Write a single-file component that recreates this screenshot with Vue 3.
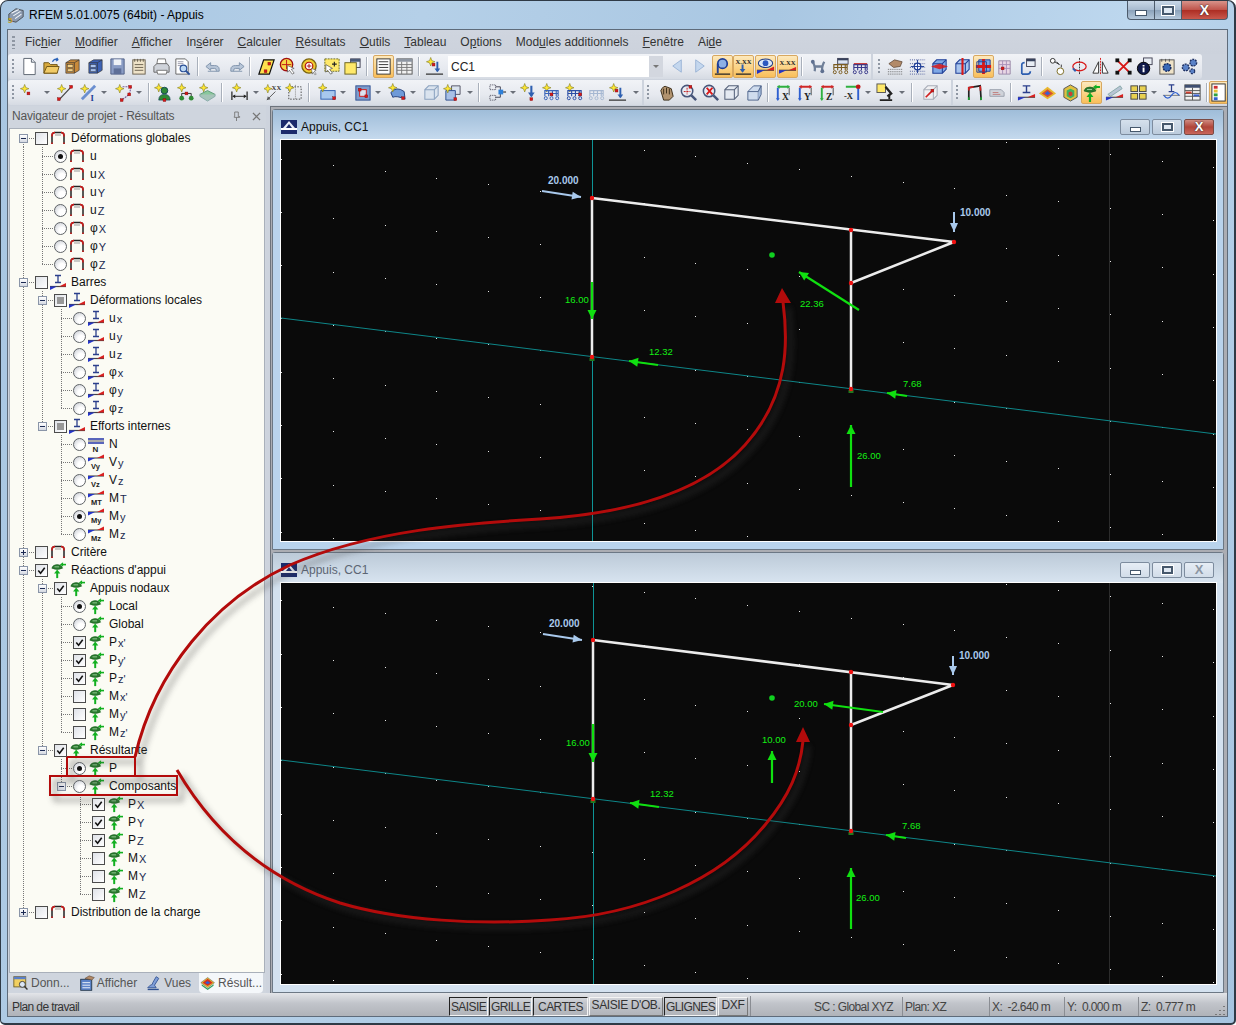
<script setup>
// petits morceaux d'icones
const sp = (x = 5, y = 5) => `<path d="M${x} ${y - 4.5}l1.2 3.3 3.3 1.2-3.3 1.2-1.2 3.3-1.2-3.3-3.3-1.2 3.3-1.2z" fill="#ffe733" stroke="#7d7a20" stroke-width=".6"/>`
const rd = (x, y) => `<rect x="${x - 1.5}" y="${y - 1.5}" width="3" height="3" fill="#d81818" stroke="#7a1010" stroke-width=".4"/>`
const txt = (s, x, y, fs = 7, c = '#222', extra = '') => `<text x="${x}" y="${y}" font-size="${fs}" fill="${c}" font-family="Liberation Serif, serif" font-weight="bold" ${extra}>${s}</text>`
const wedge = (y = 16) => `<path d="M1 ${y}H19" stroke="#333" stroke-width="1.2"/><path d="M1 ${y}h8L1 ${y + 3.5}z" fill="#2434c8"/><path d="M19 ${y}h-8l8-3.5z" fill="#d82020"/>`
const cab = (a, b) => `<path d="M3 6l5-3h9v11l-5 3H3z" fill="${a}" stroke="#333" stroke-width=".7"/><path d="M3 6h9v11M12 6l5-3" fill="none" stroke="#333" stroke-width=".7"/><rect x="4.5" y="8" width="6" height="3" fill="${b}" stroke="#333" stroke-width=".5"/><rect x="4.5" y="12.5" width="6" height="3" fill="${b}" stroke="#333" stroke-width=".5"/>`
const zoomG = (c) => `<circle cx="8.5" cy="8.5" r="6" fill="#e8edf5" stroke="#47557a" stroke-width="1.6"/><path d="M13 13l5 5" stroke="#47557a" stroke-width="2.6"/>${c}`
const cube = (s = '#5a7fb8', f = '#dfe8f4') => `<path d="M3 7l4-4h10v10l-4 4H3z" fill="${f}" stroke="${s}" stroke-width="1.1"/><path d="M3 7h10v10M13 7l4-4" fill="none" stroke="${s}" stroke-width="1.1"/>`
const truss = (c = '#3a64b8') => `<path d="M3 14V8h14v6M3 11h14M7 8v6M11 8v6M15 8v6" fill="none" stroke="${c}" stroke-width="1.2"/><circle cx="4" cy="16" r="1.6" fill="none" stroke="${c}"/><circle cx="10" cy="16" r="1.6" fill="none" stroke="${c}"/><circle cx="16" cy="16" r="1.6" fill="none" stroke="${c}"/>`
const view = (a, b, t) => `<path d="M4 4h12" stroke="${a}" stroke-width="2"/><path d="M3 4l3-2v4zM17 4l-3-2v4z" fill="${a}"/><path d="M4 5v12" stroke="${b}" stroke-width="2"/><path d="M4 19l-2-3h4z" fill="${b}"/><path d="M16 5v8" stroke="#666" stroke-width="1.2"/>${txt(t, 8.5, 18, 10)}`
const support = `<path d="M2 8q1-4 6-4t6 4q-6 3-12 0z" fill="#2b7a2f" stroke="#145a1a" stroke-width=".6"/><path d="M5 6.5h5" stroke="#9ccf9c"/><path d="M8 19v-6" stroke="#12b020" stroke-width="2.2"/><path d="M4.5 14L8 9.5l3.5 4.5z" fill="#12b020"/><path d="M18 4h-4" stroke="#12b020" stroke-width="1.8"/><path d="M14.5 1.5L11 4l3.5 2.5z" fill="#12b020"/>`

const ic = {
  new: `<path d="M4 1.5h8l4 4v13H4z" fill="#fff" stroke="#5c6470"/><path d="M12 1.5v4h4" fill="#e8ecf2" stroke="#5c6470"/>`,
  open: `<path d="M2 17V6h5l2 2h7v9z" fill="#d8a93c" stroke="#6f5415"/><path d="M2 17l3-7h13l-2 7z" fill="#f1cb66" stroke="#6f5415"/><path d="M11 5q2-4 6-2l-1.5-2M17 3l-2.5 1" fill="none" stroke="#2a62b8" stroke-width="1.4"/>`,
  cabY: cab('#c98a3a', '#f2cf84'),
  cabB: cab('#3d62b5', '#a9c3ee'),
  save: `<path d="M3 2h14v16H3z" fill="#8a9cc4" stroke="#4f5f86"/><rect x="6" y="2.5" width="8" height="6" fill="#eef1f6"/><rect x="6" y="12" width="8" height="6" fill="#5e6f98"/>`,
  clip: `<rect x="4" y="3" width="13" height="15" fill="#efe3c8" stroke="#6b6250"/><path d="M6 2v3M9 2v3M12 2v3M15 2v3M6 8h9M6 11h9M6 14h9" stroke="#6b6250"/>`,
  print: `<path d="M6 2h8l1 6H5z" fill="#fff" stroke="#777"/><path d="M2 10l3-3h11l2 3v6H2z" fill="#cfd3da" stroke="#666"/><path d="M5 14h11l-1 4H6z" fill="#fff" stroke="#777"/>`,
  prev: `<path d="M3 2h10l3 3v13H3z" fill="#fff" stroke="#666"/><path d="M5 5h6M5 7h6M5 9h4" stroke="#99a"/><circle cx="11" cy="12" r="3.5" fill="#bcd8f4" stroke="#2a4f96" stroke-width="1.2"/><path d="M13.5 14.5l4 4" stroke="#2a4f96" stroke-width="2"/>`,
  undo: `<path d="M4 15h12v-2q0-4-5-4H7V6L2 10l5 4v-2h4q2 0 2 2v1" fill="#b8c6d8" stroke="#7f93ac"/>`,
  redo: `<path d="M16 15H4v-2q0-4 5-4h4V6l5 4-5 4v-2H9q-2 0-2 2v1" fill="#b8c6d8" stroke="#7f93ac"/>`,
  para: `<path d="M7 3h11l-5 15H2z" fill="#ffe14d" stroke="#111" stroke-width="1.3"/>${rd(9, 15)}${rd(13, 7)}`,
  zwin: `<circle cx="9" cy="8" r="6.5" fill="#f8d848" stroke="#a01010" stroke-width="1.4"/><path d="M9 3v10M4 8h10" stroke="#c01818"/><path d="M10 9l7 3-3 1 3 4-2 1-3-4-2 2z" fill="#fff" stroke="#555" stroke-width=".7"/>`,
  zwin2: `<circle cx="9.5" cy="9.5" r="7.5" fill="#f0cc30" stroke="#7c6510" stroke-width="1.4"/><circle cx="9.5" cy="9.5" r="4" fill="#fff" stroke="#b01010" stroke-width="1.2"/><path d="M9.5 7v5M7 9.5h5" stroke="#b01010"/><path d="M12 12l5 2-2 1 2 3-1 1-2-3-1 2z" fill="#fff" stroke="#555" stroke-width=".6"/>`,
  sel: `<rect x="3" y="2" width="15" height="13" fill="#ffe96a" stroke="#6a6a20" stroke-dasharray="2 1"/><path d="M13 5v5M10.5 7.5h5" stroke="#222" stroke-width="1.2"/><path d="M4 8l7 4-3 1 3 4-2 1-3-4-2 2z" fill="#fff" stroke="#444" stroke-width=".7"/>`,
  win2: `<rect x="8" y="2" width="10" height="9" fill="#e8edf4" stroke="#445"/><rect x="8" y="2" width="10" height="3" fill="#4a5a78"/><rect x="2" y="6" width="12" height="12" fill="#ffe96a" stroke="#6a6220"/>`,
  list: `<rect x="3" y="2" width="14" height="16" fill="#fff" stroke="#333"/><path d="M5 5h10M5 8h10M5 11h10M5 14h10" stroke="#333"/>`,
  table: `<rect x="2" y="2" width="16" height="16" fill="#f2f2f2" stroke="#555"/><rect x="2" y="2" width="16" height="3" fill="#8e96a2"/><path d="M2 8h16M2 11h16M2 14h16M7 5v13M12.5 5v13" stroke="#777"/>`,
  ccl: `${sp(6, 5)}${rd(9, 8)}<path d="M13 5v10" stroke="#2e5fb0" stroke-width="2"/><path d="M10 12h6l-3 4z" fill="#2e5fb0"/><path d="M1 18h18" stroke="#333" stroke-width="1.4"/>`,
  aL: `<path d="M14 3v13L5 9.5z" fill="#c4d7ee" stroke="#9bb4d6"/>`,
  aR: `<path d="M6 3v13l9-6.5z" fill="#c4d7ee" stroke="#9bb4d6"/>`,
  p1: `<circle cx="10" cy="7" r="5" fill="#8db0e6" stroke="#1f3e96" stroke-width="1.8"/><path d="M5 7v10" stroke="#1f3e96" stroke-width="2"/><path d="M2 18h16" stroke="#222" stroke-width="1.4"/>`,
  xx1: `${txt('X.XX', 1.5, 7, 7)}<path d="M9 8v7" stroke="#2e5fb0" stroke-width="2"/><path d="M6 12.5h6l-3 4z" fill="#2e5fb0"/><path d="M2 18h16" stroke="#222" stroke-width="1.4"/>`,
  eye: `<ellipse cx="10" cy="6.5" rx="7.5" ry="4.5" fill="#dbe7f7" stroke="#1d3a85" stroke-width="1.1"/><circle cx="10" cy="6.5" r="3" fill="#2c58c0"/><path d="M1 14h18" stroke="#333" stroke-width="1.2"/><path d="M1 14h8l-8 4z" fill="#2434c8"/><path d="M19 14h-8l8-4z" fill="#d82020"/>`,
  xx2: `${txt('X.XX', 1.5, 8, 7)}${wedge(14)}`,
  bone: `<path d="M4 5q3 6 2 10M16 5q-3 6-2 10M6 10h8" fill="none" stroke="#6f7f98" stroke-width="2.4"/><circle cx="4" cy="5" r="2" fill="#5f7090"/><circle cx="14" cy="15" r="2" fill="#5f7090"/>`,
  val1: `<rect x="7" y="1.5" width="11" height="6" fill="#dbe4f2" stroke="#445"/><rect x="7" y="1.5" width="11" height="2" fill="#36415c"/>${truss('#7a5c20')}`,
  val2: `${truss('#3a3a8a')}<path d="M3 7h14" stroke="#c01818"/>`,
  hand: `<path d="M3 7l6-4 8 2-2 5-7 1z" fill="#b28a68" stroke="#4f3a28" stroke-width=".7"/><path d="M2 13h16M2 15.5h16M2 18h16" stroke="#666" stroke-dasharray="1 1"/>`,
  gridS: `<path d="M2 3h16M2 7h16M2 11h16M2 15h16M2 18h16" stroke="#4a5a9a" stroke-dasharray="1 1.2"/><circle cx="10" cy="10" r="3.5" fill="#f5f5ff" stroke="#1f3e96" stroke-width="1.3"/><path d="M10 3v14M3 10h14" stroke="#1f3e96"/>`,
  plane1: `${cube('#1f3e96', '#7ea8e6')}<path d="M1 10l9-3 9 3-9 3z" fill="#d81818" opacity=".85"/>`,
  plane2: `${cube('#1f3e96', '#a8c4ee')}<path d="M10 1v18" stroke="#d81818" stroke-width="2.2"/>`,
  plane3: `<path d="M5 3h12v12H5z" fill="#7ea8e6" stroke="#1f3e96"/><path d="M2 10h16M10 2v16" stroke="#d81818" stroke-width="3"/><path d="M3 5h10v11H3z" fill="none" stroke="#1f3e96"/>`,
  pink: `<path d="M4 4h12v14H4z" fill="#e8d6e4" stroke="#9a8aa8"/><path d="M4 8h12M4 12h12M8 4v14M12 4v14" stroke="#a890b8"/>${rd(8, 12)}`,
  winB: `<rect x="9" y="2" width="9" height="8" fill="#e8edf4" stroke="#445"/><rect x="9" y="2" width="9" height="2.5" fill="#36415c"/><path d="M4 18V8q0-2 3-2M4 18h6q3 0 3-3" fill="none" stroke="#2e5fb0" stroke-width="1.8"/>`,
  nodes: `<circle cx="5" cy="4" r="2.5" fill="#fff" stroke="#333"/><path d="M7 5l5 3-3-3M14 8v3" stroke="#333" fill="none"/><circle cx="13" cy="15" r="3.5" fill="#fff" stroke="#7a6a20"/>`,
  rot: `<path d="M10 1v18" stroke="#333" stroke-dasharray="2 1"/><ellipse cx="10" cy="10" rx="7" ry="4.5" fill="none" stroke="#d81818" stroke-width="1.3"/><path d="M3 12l3 3" stroke="#2e5fb0" stroke-width="2"/>`,
  mirror: `<path d="M10 1v18" stroke="#d81818" stroke-dasharray="2 1"/><path d="M8 5v12H2zM12 5v12h6z" fill="#fff" stroke="#333"/>`,
  redx: `<path d="M4 4l12 12M16 4L4 16" stroke="#d81818" stroke-width="2"/><rect x="1.5" y="1.5" width="4" height="4" fill="#111"/><rect x="14.5" y="1.5" width="4" height="4" fill="#111"/><rect x="1.5" y="14.5" width="4" height="4" fill="#111"/><rect x="14.5" y="14.5" width="4" height="4" fill="#111"/>`,
  info: `<rect x="9" y="1" width="9" height="7" fill="#e8edf4" stroke="#445"/><circle cx="9" cy="12" r="6.5" fill="#101a4a" stroke="#000"/><path d="M9 8.5v1.5M9 11v5" stroke="#fff" stroke-width="2"/>`,
  gear: `<rect x="3" y="3" width="15" height="15" fill="#efe3c8" stroke="#555"/><path d="M5 2v3M9 2v3M13 2v3" stroke="#555"/><circle cx="10.5" cy="11" r="4" fill="#3a6ab8" stroke="#162c60" stroke-width="1.6" stroke-dasharray="2 1"/>`,
  gears: `<circle cx="6" cy="11" r="3.5" fill="#5a82c8" stroke="#1f3060" stroke-width="1.5" stroke-dasharray="2 1"/><circle cx="14" cy="6" r="3.5" fill="#5a82c8" stroke="#1f3060" stroke-width="1.5" stroke-dasharray="2 1"/><circle cx="13" cy="15" r="2.5" fill="#5a82c8" stroke="#1f3060" stroke-width="1.3" stroke-dasharray="2 1"/>`,
  // deuxieme ligne
  nodeS: `${sp(7, 6)}${rd(11, 11)}`,
  lineS: `<path d="M4 18L18 3" stroke="#444" stroke-width="1.3"/>${sp(7, 6)}${rd(4, 17)}${rd(17, 4)}`,
  beamS: `<path d="M3 17L17 3" stroke="#6b8fd0" stroke-width="3"/>${sp(6, 6)}${txt('I', 12, 19, 9, '#1f3e96')}`,
  polyS: `<path d="M8 4h9l-2 8-8 6" fill="none" stroke="#7a5c9a" stroke-width="1.2" stroke-dasharray="2 1"/>${sp(5, 6)}${rd(16, 4)}${rd(15, 12)}${rd(7, 18)}`,
  supS: `${sp(5, 5)}<circle cx="11" cy="8" r="3.5" fill="#2f8a35" stroke="#145"/><path d="M5 18q0-6 6-6t6 6z" fill="#2f8a35" stroke="#145" stroke-width=".7"/>${rd(11, 18)}`,
  sup2: `${sp(6, 5)}<path d="M6 11h10M6 11v3M16 11v3" stroke="#333"/><circle cx="6" cy="16" r="2.5" fill="#2f8a35"/><circle cx="16" cy="16" r="2.5" fill="#2f8a35"/>${rd(11, 11)}`,
  slab: `${sp(6, 5)}<path d="M2 12l8-4 8 4-8 5z" fill="#8ac79c" stroke="#5e9a78"/><path d="M2 12v2l8 5 8-5v-2" fill="#a6c4b8" stroke="#8aa"/>`,
  dim1: `${sp(7, 5)}<path d="M2 9v9M18 9v9" stroke="#222" stroke-width="1.3"/><path d="M3 14h14" stroke="#222"/><path d="M2.5 14l3-2v4zM17.5 14l-3-2v4z" fill="#222"/>`,
  dimX: `${sp(4, 6)}${txt('XX', 8, 7, 7, '#333')}<path d="M3 18l9-9" stroke="#555"/><path d="M3 18l1-4 3 3z" fill="#555"/>`,
  dimB: `<rect x="4" y="4" width="13" height="13" fill="none" stroke="#444" stroke-dasharray="1.5 1.5"/>${sp(5, 5)}<path d="M11 2v16" stroke="#888" stroke-dasharray="1 1"/>`,
  surfS: `<rect x="3" y="8" width="15" height="9" fill="#a8c8ee" stroke="#2e5fb0"/>${sp(5, 5)}${rd(17, 16)}`,
  openS: `<rect x="3" y="3" width="15" height="15" fill="#7f9ccc" stroke="#2e4f90"/><rect x="7" y="7" width="7" height="7" fill="#dbe4f2" stroke="#d81818"/>${rd(7, 7)}${rd(14, 14)}`,
  cylS: `<path d="M3 10q6-7 14-1l1 8q-9-4-13-2z" fill="#6f9ad8" stroke="#233e7a"/>${sp(5, 5)}${rd(16, 16)}`,
  solid: cube('#8ca3c0', '#dae3ee'),
  solidS: `<path d="M9 3h9v9H9z" fill="#dae3ee" stroke="#556"/><path d="M3 8h10v10H3z" fill="#a8c0e6" stroke="#2e4f90"/>${sp(5, 6)}${rd(13, 17)}`,
  conn: `<rect x="2" y="2" width="6" height="5" fill="none" stroke="#445" stroke-dasharray="1 1"/><rect x="2" y="13" width="6" height="5" fill="none" stroke="#445" stroke-dasharray="1 1"/><path d="M8 4h5v5M8 15h5v-5" fill="none" stroke="#445"/><rect x="11" y="7" width="5" height="5" fill="#2e7fd8"/><path d="M16 9.5h3" stroke="#111"/>`,
  loadS: `${sp(6, 5)}<path d="M13 3v11" stroke="#2e5fb0" stroke-width="2.2"/><path d="M9.5 10h7l-3.5 5z" fill="#2e5fb0"/>${rd(13, 17)}`,
  frS: `${sp(5, 5)}${truss()}${rd(10, 12)}`,
  frS2: `${sp(5, 5)}${truss('#2b4ea6')}${rd(16, 12)}`,
  frP: truss('#a6b8d2'),
  hand2: `<path d="M4 8q3-6 6-4l5 2 2 8-4 4H7z" fill="#b2936f" stroke="#3a2c18"/><path d="M7 6v6M10 5v6M13 6v6" stroke="#3a2c18"/>`,
  zm1: zoomG(`<path d="M5 9h7M8.5 5v7" stroke="#c01818" stroke-dasharray="2 1"/>${rd(12, 4)}`),
  zm2: zoomG(`<path d="M6 5l6 7M12 5l-6 7" stroke="#d81818" stroke-width="2"/>`),
  cubeW: cube('#56627a', '#e4e9f1'),
  cubeI: `<path d="M3 9l6-6h8l-3 6v9H3z" fill="#cfdcee" stroke="#50658c"/><path d="M3 9h11M14 9l3-6v9l-3 6" fill="#a6bddd" stroke="#50658c"/>`,
  vX: view('#2fb040', '#2e5fd0', 'X'),
  vY: view('#d02828', '#2e5fd0', 'Y'),
  vZ: view('#d02828', '#2fb040', 'Z'),
  vMX: `<path d="M3 4h12" stroke="#2fb040" stroke-width="2"/><circle cx="16" cy="4" r="2.5" fill="#c01818"/><path d="M16 6v12" stroke="#2e5fd0" stroke-width="2"/>${txt('-X', 1, 17, 9)}`,
  micro: `<rect x="1" y="1" width="9" height="9" fill="#ffe96a" stroke="#555"/><path d="M10 4l6 7-4 3" fill="none" stroke="#222" stroke-width="2.4"/><path d="M4 18h13" stroke="#222" stroke-width="2"/><path d="M14 12v5" stroke="#222" stroke-width="2"/>`,
  cubeR: `${cube('#a8adb8', '#f0f0f2')}<path d="M5 15l7-7" stroke="#d02020" stroke-width="1.8"/>${rd(12, 8)}`,
  fr: `<path d="M4 18V5l12-2 1 15" fill="none" stroke="#222" stroke-width="1.8"/><path d="M4 8V5l5-1M16 3l.4 5" fill="none" stroke="#d02020" stroke-width="1.8"/><path d="M4 15v3M17 15v3" stroke="#18a030" stroke-width="1.8"/>`,
  tag: `<path d="M3 7h12l3 3v4H3z" fill="#cfd3da" stroke="#9aa0ac"/><path d="M6 10h6M6 12h8" stroke="#c08080"/>`,
  bw: `<path d="M6 3h8M10 3v7M6 10h8" stroke="#2b3f8c" stroke-width="1.5"/>${wedge(15)}`,
  rain: `<path d="M1 11l9-7 9 7-9 6z" fill="#e8b830"/><path d="M4 11l6-4.5 6 4.5-6 4z" fill="#d85030"/><path d="M7 11l3-2.5 3 2.5-3 2z" fill="#3a60d0"/>`,
  rainC: `<path d="M3 6l7-4 7 4v9l-7 4-7-4z" fill="#e0c040" stroke="#555"/><path d="M6 8l4-2 4 2v6l-4 2-4-2z" fill="#40b060"/><path d="M8 10l2-1 2 1v3l-2 1-2-1z" fill="#d04030"/>`,
  sup: `<g transform="scale(1.05)">${support}</g>`,
  wg: `<path d="M3 12L16 3l2 3-12 8z" fill="#b8c4d4" stroke="#8aa"/>${wedge(15)}`,
  four: `<rect x="2" y="3" width="7" height="6" fill="#e8d050" stroke="#444"/><rect x="11" y="3" width="7" height="6" fill="#e8d050" stroke="#444"/><rect x="2" y="11" width="7" height="6" fill="#e8d050" stroke="#444"/><rect x="11" y="11" width="7" height="6" fill="#e8d050" stroke="#444"/>`,
  bc: `<path d="M7 2h6M10 2v7M7 9h6" stroke="#2b3f8c" stroke-width="1.3"/><path d="M1 13h18" stroke="#777"/><path d="M2 13q4 6 8 0t8 0" fill="none" stroke="#2e5fd0" stroke-width="1.3"/>`,
  tc: `<rect x="2" y="2" width="16" height="16" fill="#f2f2f2" stroke="#444"/><rect x="2" y="2" width="16" height="3" fill="#3e4e70"/><path d="M2 8h16M2 11h16M2 14h16M10 5v13" stroke="#555"/><rect x="3" y="9" width="6" height="2" fill="#d04030"/><rect x="11" y="12" width="6" height="2" fill="#3a60d0"/>`,
  colL: `<rect x="2" y="1" width="14" height="18" fill="#fff" stroke="#333"/><rect x="4" y="3" width="4" height="3" fill="#d03030"/><rect x="4" y="7" width="4" height="3" fill="#e8c030"/><rect x="4" y="11" width="4" height="3" fill="#30a040"/><rect x="4" y="15" width="4" height="3" fill="#3060d0"/>`,
  // onglets
  tDon: `<rect x="1" y="2" width="14" height="12" fill="#f2d060" stroke="#6a5a20"/><rect x="1" y="2" width="14" height="3" fill="#5a7fc8"/><circle cx="11" cy="11" r="3.5" fill="#dbe7f7" stroke="#333"/><path d="M13.5 13.5l3.5 3.5" stroke="#333" stroke-width="1.6"/>`,
  tAff: `<rect x="2" y="5" width="13" height="13" fill="#5a82c8" stroke="#234"/><path d="M4 9h9M4 12h9M4 15h9" stroke="#fff"/><path d="M7 4l5-3 6 2-3 3z" fill="#b28a68" stroke="#4f3a28" stroke-width=".6"/>`,
  tVue: `<path d="M12 2l3 2-5 8 2 3H2l3-3q3 0 3-3z" fill="#7f9ed8" stroke="#2e4f90"/><path d="M2 17h13" stroke="#2e4f90" stroke-width="1.6"/>`,
  tRes: `<path d="M1 9l8-6 8 6-8 6z" fill="#e8c030" stroke="#555" stroke-width=".6"/><path d="M3 9l6-4.5 6 4.5-6 4z" fill="#d83020"/><path d="M6 9l3-2 3 2-3 2z" fill="#3060d0"/><path d="M2 11l7 5 7-5v1.5l-7 5-7-5z" fill="#30a060"/>`
}

// icones de l'arbre
const wg = (t) => `<path d="M0 6h16" stroke="#444" stroke-width="1.1"/><path d="M0 6h7L0 9.5z" fill="#2434c8"/><path d="M16 6H9l7-3.5z" fill="#d82020"/><text x="3" y="16.5" font-size="7.5" font-weight="bold" fill="#222" font-family="Liberation Sans, sans-serif">${t}</text>`
const ti = {
  frame: `<path d="M2 16V7.5q0-3 3-3h6q3 0 3 3V16" fill="none" stroke="#222" stroke-width="1.5"/><path d="M2 8.5v-1q0-3 3-3M11 4.5q3 0 3 3v1M2 14.5V16M14 14.5V16" fill="none" stroke="#d01818" stroke-width="1.5"/><path d="M5 7h6" stroke="#999"/>`,
  beam: `<path d="M5 3.5h6M8 3.5v7M5 10.5h6" stroke="#2b3f8c" stroke-width="1.3"/><path d="M0 14.5h16" stroke="#444" stroke-width="1.2"/><path d="M0 14.5h7L0 18z" fill="#2434c8"/><path d="M16 14.5H9l7-3.5z" fill="#d82020"/>`,
  sup: `<g transform="translate(0 1) scale(.9)">${support}</g>`,
  n: `<path d="M0 5h16M0 9h16" stroke="#2434a8" stroke-width="1.6"/><path d="M0 7h16" stroke="#999" stroke-width="1.6"/><text x="4.5" y="17.5" font-size="8" font-weight="bold" fill="#222" font-family="Liberation Sans, sans-serif">N</text>`,
  vy: wg('Vy'), vz: wg('Vz'), mt: wg('MT'), my: wg('My'), mz: wg('Mz')
}

// construction de l'arbre
const leaf = (t, s, i, c = 'r0') => ({ t, s, i, c })
const gl = () => [['u', ''], ['u', 'X'], ['u', 'Y'], ['u', 'Z'], ['φ', 'X'], ['φ', 'Y'], ['φ', 'Z']].map(([a, b], k) => leaf(a, b, 'frame', k === 0 ? 'r1' : 'r0'))
const lo = ['x', 'y', 'z']
const nodal = [
  leaf('Local', '', 'sup', 'r1'), leaf('Global', '', 'sup'),
  leaf('P', "x'", 'sup', 'c1'), leaf('P', "y'", 'sup', 'c1'), leaf('P', "z'", 'sup', 'c1'),
  leaf('M', "x'", 'sup', 'c0'), leaf('M', "y'", 'sup', 'c0'), leaf('M', "z'", 'sup', 'c0')
]
const comp = [['P', 'X', 'c1'], ['P', 'Y', 'c1'], ['P', 'Z', 'c1'], ['M', 'X', 'c0'], ['M', 'Y', 'c0'], ['M', 'Z', 'c0']].map(([a, b, c]) => leaf(a, b, 'sup', c))
const data = [
  { t: 'Déformations globales', i: 'frame', c: 'c0', kids: gl() },
  { t: 'Barres', i: 'beam', c: 'c0', kids: [
    { t: 'Déformations locales', i: 'beam', c: 'tri', kids: [...lo.map((x) => leaf('u', x, 'beam')), ...lo.map((x) => leaf('φ', x, 'beam'))] },
    { t: 'Efforts internes', i: 'beam', c: 'tri', kids: [
      leaf('N', '', 'n'), leaf('V', 'y', 'vy'), leaf('V', 'z', 'vz'), leaf('M', 'T', 'mt'), leaf('M', 'y', 'my', 'r1'), leaf('M', 'z', 'mz')
    ] }
  ] },
  { t: 'Critère', i: 'frame', c: 'c0', closed: true },
  { t: "Réactions d'appui", i: 'sup', c: 'c1', kids: [
    { t: 'Appuis nodaux', i: 'sup', c: 'c1', kids: nodal },
    { t: 'Résultante', i: 'sup', c: 'c1', kids: [
      leaf('P', '', 'sup', 'r1'),
      { t: 'Composants', i: 'sup', c: 'r0', kids: comp }
    ] }
  ] },
  { t: 'Distribution de la charge', i: 'frame', c: 'c0', closed: true }
]
const rows = []
const walk = (list, depth, cont) => {
  list.forEach((n, k) => {
    const hasNext = k < list.length - 1
    rows.push({ ...n, depth, cont: [...cont], hasNext, first: depth === 0 && k === 0, id: rows.length })
    if (n.kids) walk(n.kids, depth + 1, [...cont, ...(hasNext ? [depth] : [])])
  })
}
walk(data, 0, [])
const gx = (d) => 13 + 19 * d

// barres d'outils : [nom, centre x]
const W = { grip: 4, sep: 2, caret: 8, brk: 2 }
const bar = (start, items) => {
  let x = start
  return items.map(([n, c, on, w]) => {
    const width = w || W[n] || 21
    const left = c - width / 2
    const ml = left - x
    x = left + width
    return { n, width, ml, on, key: n + c }
  })
}
const bar1 = bar(8, [
  ['grip', 13], ['new', 29], ['open', 51], ['cabY', 72], ['cabB', 95], ['save', 117], ['clip', 138], ['print', 161], ['prev', 182], ['sep', 198],
  ['undo', 213], ['redo', 236], ['sep', 250], ['para', 266], ['zwin', 287], ['zwin2', 309], ['sel', 331], ['win2', 352], ['sep', 367],
  ['list', 383, 1], ['table', 404], ['sep', 419], ['ccl', 434], ['combo', 555.5, 0, 215], ['aL', 677], ['aR', 699],
  ['p1', 722, 1], ['xx1', 743.5, 1], ['eye', 765.5, 1], ['xx2', 787.5, 1], ['sep', 802], ['bone', 818], ['val1', 840], ['val2', 860], ['brk', 872],
  ['grip', 879], ['hand', 895], ['gridS', 917], ['plane1', 939], ['plane2', 962], ['plane3', 983, 1], ['pink', 1004], ['winB', 1027], ['sep', 1042],
  ['nodes', 1057], ['rot', 1079], ['mirror', 1100], ['redx', 1123], ['info', 1144], ['gear', 1166], ['gears', 1189]
])
const bar2 = bar(8, [
  ['grip', 13], ['nodeS', 27], ['caret', 47], ['lineS', 64], ['beamS', 88], ['caret', 104], ['polyS', 124], ['caret', 139], ['sep', 149],
  ['supS', 163], ['sup2', 185], ['slab', 207], ['sep', 222], ['dim1', 239], ['caret', 256], ['dimX', 273], ['dimB', 294], ['sep', 309],
  ['surfS', 327], ['caret', 343], ['openS', 362], ['caret', 378], ['cylS', 397], ['caret', 413], ['solid', 431], ['solidS', 452], ['caret', 470], ['sep', 479],
  ['conn', 497], ['caret', 513], ['loadS', 528], ['frS', 551], ['frS2', 574], ['frP', 596], ['ccl', 617], ['caret', 636], ['brk', 643],
  ['grip', 648], ['hand2', 666], ['zm1', 688], ['zm2', 710], ['cubeW', 731], ['cubeI', 754], ['sep', 768], ['vX', 783], ['vY', 805], ['vZ', 827],
  ['vMX', 852], ['caret', 868], ['micro', 885], ['caret', 902], ['sep', 912], ['cubeR', 930], ['caret', 945], ['brk', 952],
  ['grip', 957], ['fr', 974], ['tag', 996], ['sep', 1011], ['bw', 1026], ['rain', 1047], ['rainC', 1070], ['sup', 1091, 1], ['wg', 1114], ['four', 1138], ['caret', 1154],
  ['bc', 1171], ['tc', 1192], ['sep', 1207], ['colL', 1219, 1]
])

// menu : la lettre soulignee est coupee en trois
const menus = [['Fic', 'h', 'ier'], ['', 'M', 'odifier'], ['', 'A', 'fficher'], ['In', 's', 'érer'], ['', 'C', 'alculer'], ['', 'R', 'ésultats'], ['', 'O', 'utils'], ['', 'T', 'ableau'], ['O', 'p', 'tions'], ['Mod', 'u', 'les additionnels'], ['', 'F', 'enêtre'], ['Ai', 'd', 'e']]
const tabs = [['tDon', 'Donn...'], ['tAff', 'Afficher'], ['tVue', 'Vues'], ['tRes', 'Résult...', 1]]
const panes = [
  { t: 'SAISIE', w: 39, k: 'in' }, { t: 'GRILLE', w: 43, k: 'in' }, { t: 'CARTES', w: 55, k: 'in' },
  { t: "SAISIE D'OB.", w: 74, k: 'up' }, { t: 'GLIGNES', w: 53, k: 'in' }, { t: 'DXF', w: 30, k: 'up' }
]
const infos = [
  { t: 'SC : Global XYZ', w: 90 }, { t: 'Plan: XZ', w: 87 }, { t: 'X:  -2.640 m', w: 75 }, { t: 'Y:  0.000 m', w: 74 }, { t: 'Z:  0.777 m', w: 70 }
]

// fenetres de vue : trame de points et cotes
const dots = (dy) => {
  const out = []
  for (let i = -10; i < 12; i++) for (let j = -12; j < 12; j++) {
    const x = 747.6 + i * 51.8
    const y = 163.3 + dy + i * 6.4 + j * 53.3
    if (x > 281 && x < 1216 && y > 140 + dy && y < 541 + dy) out.push({ x: Math.floor(x), y: Math.floor(y), k: i + '_' + j })
  }
  return out
}
const views = [
  {
    title: 'Appuis, CC1', active: true, box: '281 140 935 401', dots: dots(0), vx: 592.5, base: 'M281 318L1216 434',
    mem: 'M592 198L954 242L851 283M851 230V389M592 198V357', nodes: [[592, 198], [851, 230], [954, 242], [851, 283], [851, 389], [592, 357]],
    supp: [[592, 359], [851, 391]],
    load: [[542, 191, 581, 197, 548, 184, '20.000'], [954, 212, 954, 232, 960, 216, '10.000']],
    res: [[859, 310, 799, 272], [592, 282, 592, 319], [658, 365, 629, 361], [907, 396, 887, 393], [851, 487, 851, 425]],
    lab: [[800, 307, '22.36'], [565, 303, '16.00'], [649, 355, '12.32'], [903, 387, '7.68'], [857, 459, '26.00']],
    ball: [772, 255]
  },
  {
    title: 'Appuis, CC1', active: false, box: '281 583 935 401', dots: dots(442), vx: 593.5, base: 'M281 760L1216 876',
    mem: 'M593 640L953 685L851 725M851 672V831M593 640V799', nodes: [[593, 640], [851, 672], [953, 685], [851, 725], [851, 831], [593, 799]],
    supp: [[593, 801], [851, 833]],
    load: [[543, 634, 582, 640, 549, 627, '20.000'], [953, 656, 953, 675, 959, 659, '10.000']],
    res: [[883, 712, 824, 704], [772, 783, 772, 751], [593, 724, 593, 762], [659, 807, 630, 803], [906, 838, 886, 835], [851, 929, 851, 868]],
    lab: [[794, 707, '20.00'], [762, 743, '10.00'], [566, 746, '16.00'], [650, 797, '12.32'], [902, 829, '7.68'], [856, 901, '26.00']],
    ball: [772, 698]
  }
]
// pointe de fleche pour une cote (x1,y1 -> x2,y2)
const head = (a, len, hw) => {
  const [x1, y1, x2, y2] = a
  const l = Math.hypot(x2 - x1, y2 - y1)
  const ux = (x2 - x1) / l, uy = (y2 - y1) / l
  const bx = x2 - ux * len, by = y2 - uy * len
  return `${x2},${y2} ${bx - uy * hw},${by + ux * hw} ${bx + uy * hw},${by - ux * hw}`
}
const curve1 = 'M135 757C155 670 215 600 290 565C370 530 470 523 540 519C620 514 700 495 745 445C790 395 788 340 783 302'
const curve2 = 'M177 770C215 835 270 880 340 903C400 921 480 925 550 920C640 915 720 880 765 825C790 795 800 770 803 741'
</script>

<template>
  <div class="win">
    <div class="titlebar">
      <svg class="appicon" viewBox="0 0 20 20">
        <path d="M2 9l8-6 8 2v7l-8 6-8-2z" fill="#8c9bb0" stroke="#333" stroke-width=".8" />
        <path d="M5 8l8-4M7 11l8-5M9 14l7-5" stroke="#f4f6fa" stroke-width="1.2" />
        <text x="1" y="19" font-size="9" font-weight="bold" fill="#c8a020" font-family="Liberation Sans, sans-serif">5</text>
      </svg>
      <span class="apptitle">RFEM 5.01.0075 (64bit) - Appuis</span>
      <div class="capbtns">
        <div class="cap min"><i class="gmin"></i></div>
        <div class="cap max"><i class="gmax"></i></div>
        <div class="cap close"><span class="gx">X</span></div>
      </div>
    </div>

    <div class="client">
      <div class="menubar">
        <i class="grip"></i>
        <span v-for="m in menus" :key="m.join('')" class="menu">{{ m[0] }}<u>{{ m[1] }}</u>{{ m[2] }}</span>
      </div>

      <div v-for="(b, r) in [bar1, bar2]" :key="r" class="toolbar" :class="r ? 'tb2' : 'tb1'">
        <template v-for="it in b" :key="it.key">
          <i v-if="it.n === 'grip'" class="tgrip" :style="{ marginLeft: it.ml + 'px' }"></i>
          <i v-else-if="it.n === 'sep'" class="tsep" :style="{ marginLeft: it.ml + 'px' }"></i>
          <i v-else-if="it.n === 'brk'" class="tbrk" :style="{ marginLeft: it.ml + 'px' }"></i>
          <i v-else-if="it.n === 'caret'" class="tcaret" :style="{ marginLeft: it.ml + 'px' }"></i>
          <div v-else-if="it.n === 'combo'" class="combo" :style="{ marginLeft: it.ml + 'px', width: it.width + 'px' }">
            <span>CC1</span><b class="combobtn"></b>
          </div>
          <div v-else class="tbtn" :class="{ on: it.on }" :style="{ marginLeft: it.ml + 'px' }">
            <svg viewBox="0 0 20 20" width="19" height="19" v-html="ic[it.n]"></svg>
          </div>
        </template>
      </div>

      <div class="work">
        <aside class="nav">
          <div class="navhead">
            <span>Navigateur de projet - Résultats</span>
            <svg class="pin" viewBox="0 0 10 12" width="9" height="11"><path d="M3 1h4v5h1.5v1h-6V6H3zM5 7v4" fill="none" stroke="#777" /></svg>
            <svg class="navx" viewBox="0 0 10 10" width="9" height="9"><path d="M1 1l8 8M9 1l-8 8" stroke="#777" stroke-width="1.4" /></svg>
          </div>
          <div class="tree">
            <div v-for="r in rows" :key="r.id" class="row" :style="{ paddingLeft: 25 + 19 * r.depth + 'px' }">
              <i v-for="c in r.cont" :key="c" class="vline" :style="{ left: gx(c) + 'px' }"></i>
              <i class="vline" :class="{ half: !r.hasNext, lower: r.first }" :style="{ left: gx(r.depth) + 'px' }"></i>
              <i class="hline" :style="{ left: gx(r.depth) + 'px' }"></i>
              <i v-if="r.kids || r.closed" class="exp" :style="{ left: gx(r.depth) - 4 + 'px' }">
                <b></b><b v-if="r.closed" class="v"></b>
              </i>
              <span v-if="r.c[0] === 'r'" class="radio"><b v-if="r.c === 'r1'"></b></span>
              <span v-else class="check" :class="{ tri: r.c === 'tri' }">
                <svg v-if="r.c === 'c1'" viewBox="0 0 12 12" width="11" height="11"><path d="M2.5 6l2.5 3 4.5-6" fill="none" stroke="#111" stroke-width="1.7" /></svg>
              </span>
              <svg class="ticon" viewBox="0 0 16 20" width="16" height="20" v-html="ti[r.i]"></svg>
              <span class="lbl">{{ r.t }}<sub v-if="r.s">{{ r.s }}</sub></span>
            </div>
          </div>
          <div class="tabs">
            <div v-for="t in tabs" :key="t[0]" class="tab" :class="{ cur: t[2] }">
              <svg viewBox="0 0 20 20" width="17" height="17" v-html="ic[t[0]]"></svg>
              <span>{{ t[1] }}</span>
            </div>
          </div>
        </aside>

        <main class="mdi">
          <section v-for="v in views" :key="v.box" class="child" :class="{ active: v.active }">
            <header class="chead">
              <svg class="chicon" viewBox="0 0 16 14" width="16" height="14">
                <rect width="16" height="14" fill="#1b2a6b" />
                <path d="M0 8h16v2H0z" fill="#fff" />
                <path d="M8 1L2 8h3l3-4 3 4h3z" fill="#e8eef8" />
              </svg>
              <span class="ctitle">{{ v.title }}</span>
              <div class="cbtns">
                <div class="cb"><i class="gmin s"></i></div>
                <div class="cb"><i class="gmax s"></i></div>
                <div class="cb x"><span class="gx s">X</span></div>
              </div>
            </header>
            <svg class="view" :viewBox="v.box" width="935" height="401">
              <rect x="0" y="0" width="1236" height="1025" fill="#0a0a0a" />
              <rect v-for="p in v.dots" :key="p.k" :x="p.x" :y="p.y" width="1" height="1" fill="#e8e8e8" />
              <path :d="'M' + v.vx + ' 0V1025'" stroke="#0e9496" stroke-width="1" />
              <path d="M1109.5 0V1025" stroke="#2c2c2c" stroke-width="1" />
              <path :d="v.base" stroke="#0e8688" stroke-width="1" fill="none" />
              <path :d="v.mem" stroke="#ececec" stroke-width="2.5" fill="none" />
              <rect v-for="s in v.supp" :key="s[0]" :x="s[0] - 2.5" :y="s[1] - 1" width="5" height="3" fill="#1f7a1f" />
              <circle v-for="n in v.nodes" :key="n[0] + '_' + n[1]" :cx="n[0]" :cy="n[1]" r="2.2" fill="#f01010" />
              <template v-for="l in v.load" :key="l[6]">
                <path :d="`M${l[0]} ${l[1]}L${l[2]} ${l[3]}`" stroke="#a9c9ec" stroke-width="2" />
                <polygon :points="head(l, 9, 4)" fill="#a9c9ec" />
                <text :x="l[4]" :y="l[5]" class="ltxt">{{ l[6] }}</text>
              </template>
              <template v-for="a in v.res" :key="a.join()">
                <path :d="`M${a[0]} ${a[1]}L${a[2]} ${a[3]}`" stroke="#10e010" stroke-width="2.2" />
                <polygon :points="head(a, 9, 4.5)" fill="#10e010" />
              </template>
              <text v-for="t in v.lab" :key="t[2]" :x="t[0]" :y="t[1]" class="gtxt">{{ t[2] }}</text>
              <circle :cx="v.ball[0]" :cy="v.ball[1]" r="2.8" fill="#10d020" />
            </svg>
          </section>
        </main>
      </div>

      <footer class="status">
        <span class="plan">Plan de travail</span>
        <span v-for="p in panes" :key="p.t" class="pane" :class="p.k" :style="{ width: p.w + 'px' }">{{ p.t }}</span>
        <i class="ssep"></i>
        <span v-for="f in infos" :key="f.t" class="info" :style="{ width: f.w + 'px' }">{{ f.t }}</span>
        <svg class="sgrip" viewBox="0 0 12 12" width="12" height="12"><path d="M10 2v1M10 6v1M10 10v1M6 6v1M6 10v1M2 10v1" stroke="#777" stroke-width="2" /></svg>
      </footer>
    </div>

    <svg class="over" viewBox="0 0 1236 1025" width="1236" height="1025">
      <defs><filter id="soft" x="-10%" y="-10%" width="120%" height="120%"><feGaussianBlur stdDeviation="3" /></filter></defs>
      <g transform="translate(5 5)" filter="url(#soft)" opacity=".55" fill="none" stroke="#444" stroke-width="3">
        <path :d="curve1" /><path :d="curve2" />
        <rect x="67" y="757" width="68" height="19" /><rect x="50" y="776" width="127" height="19" />
      </g>
      <g fill="none" stroke="#b30b0b">
        <path :d="curve1" stroke-width="3" /><path :d="curve2" stroke-width="3" />
        <rect x="67" y="757" width="68" height="19" stroke-width="2" /><rect x="50" y="776" width="127" height="19" stroke-width="2" />
      </g>
      <polygon points="782,288 775,303 791,303" fill="#b30b0b" />
      <polygon points="803,727 796,742 810,742" fill="#b30b0b" />
    </svg>
  </div>
</template>

<style scoped>
.win {
  position: relative;
  width: 1236px;
  height: 1025px;
  box-sizing: border-box;
  padding: 0 6px 6px;
  display: flex;
  flex-direction: column;
  overflow: hidden;
  border: 1px solid #2f3a46;
  border-right-width: 2px;
  border-bottom-width: 2px;
  border-radius: 8px 8px 5px 5px;
  background: linear-gradient(100deg, #a8c6e2 0%, #b5d0e8 30%, #a9c7e2 55%, #bdd7ee 80%, #a6c4e0 100%);
  font-family: "Liberation Sans", Arial, sans-serif;
  font-size: 12px;
  color: #111;
}
.titlebar {
  height: 28px;
  flex: none;
  display: flex;
  align-items: center;
}
.appicon { width: 18px; height: 18px; }
.apptitle { margin-left: 4px; color: #000; }
.capbtns { margin-left: auto; align-self: flex-start; display: flex; height: 19px; }
.cap {
  display: flex;
  align-items: center;
  justify-content: center;
  height: 19px;
  border: 1px solid #4d5b6b;
  border-top: none;
  box-sizing: border-box;
  background: linear-gradient(#c9d8e8, #a8bbd0 48%, #8da3bb 52%, #b4c7da);
}
.cap.min { width: 28px; border-radius: 0 0 0 4px; }
.cap.max { width: 27px; border-left: none; }
.cap.close { width: 46px; border-left: none; border-radius: 0 0 4px 0; background: linear-gradient(#d8938a, #c0554c 48%, #ad2e24 52%, #c9584c); }
.gmin { display: block; width: 10px; height: 4px; background: #fff; border: 1px solid #46586c; margin-top: 5px; }
.gmin.s { width: 9px; height: 3px; }
.gmax { display: block; width: 8px; height: 5px; border: 2px solid #46586c; outline: 1px solid #fff; background: #dfe8f2; }
.gmax.s { width: 7px; height: 4px; }
.gx { color: #fff; font-weight: bold; font-size: 14px; line-height: 14px; text-shadow: 0 0 1px #433, 0 0 2px #433; }
.gx.s { font-size: 13px; }

.client {
  flex: 1;
  display: flex;
  flex-direction: column;
  min-height: 0;
  border: 1px solid #5e6b7a;
  background: #cdd3dd;
  overflow: hidden;
}
.menubar {
  height: 24px;
  flex: none;
  display: flex;
  align-items: center;
  padding-left: 4px;
  background: linear-gradient(#cfd5df, #ccd2dc);
  color: #333;
}
.grip { width: 3px; height: 13px; margin-right: 10px; background: repeating-linear-gradient(#8f97a3 0 2px, transparent 2px 4px); }
.menu { margin-right: 14px; white-space: pre; }
.toolbar {
  height: 25px;
  flex: none;
  display: flex;
  align-items: center;
  margin-bottom: 1px;
  border-radius: 3px;
  background: linear-gradient(#f1f3f7, #e6e9ef 60%, #d6dbe3);
  overflow: hidden;
}
.tb1 { width: 1194px; }
.tb2 { width: 1222px; }
.tgrip { flex: none; width: 4px; height: 16px; background: repeating-linear-gradient(#8f97a3 0 2px, transparent 2px 4px); background-size: 2px 100%; background-repeat: no-repeat; background-position: center; }
.tsep { flex: none; width: 2px; height: 19px; background: linear-gradient(90deg, #a9b0bb 50%, #fff 50%); }
.tbrk { flex: none; width: 2px; height: 25px; background: #cdd3dd; }
.tcaret { flex: none; width: 8px; height: 4px; display: block; }
.tcaret::after { content: ""; display: block; margin: 0 auto; width: 0; height: 0; border: 3px solid transparent; border-top: 3px solid #6a6f78; border-bottom: none; }
.tbtn {
  flex: none;
  width: 21px;
  height: 23px;
  box-sizing: border-box;
  display: flex;
  align-items: center;
  justify-content: center;
  border: 1px solid transparent;
  border-radius: 2px;
}
.tbtn.on {
  border-color: #d8a860;
  background: linear-gradient(#fde9bd, #fbd58a 50%, #f9be5a);
}
.combo {
  flex: none;
  height: 21px;
  box-sizing: border-box;
  display: flex;
  align-items: center;
  background: #fff;
  padding-left: 3px;
  color: #222;
}
.combo span { flex: 1; }
.combobtn { width: 14px; height: 21px; background: #d3d7df; display: flex; align-items: center; justify-content: center; }
.combobtn::after { content: ""; border: 3px solid transparent; border-top: 3px solid #777; border-bottom: none; }

.work { flex: 1; min-height: 0; display: flex; }
.nav {
  width: 257px;
  flex: none;
  margin-left: 1px;
  display: flex;
  flex-direction: column;
  background: #cfd5de;
}
.navhead {
  height: 22px;
  flex: none;
  box-sizing: border-box;
  padding: 0 0 2px 3px;
  display: flex;
  align-items: center;
  color: #555;
  letter-spacing: -.2px;
}
.navhead .pin { margin-left: auto; }
.navhead .navx { margin: 0 5px 0 11px; }
.tree {
  flex: 1;
  min-height: 0;
  margin-right: 1px;
  background: #fbfbf4;
  border: 1px solid #a9b0ba;
  box-sizing: border-box;
  overflow: hidden;
}
.row {
  position: relative;
  height: 18px;
  display: flex;
  align-items: center;
  box-sizing: border-box;
  white-space: nowrap;
}
.vline, .hline { position: absolute; display: block; }
.vline {
  top: 0;
  bottom: 0;
  width: 1px;
  background: repeating-linear-gradient(#777 0 1px, transparent 1px 2px);
}
.vline.half { bottom: 9px; }
.vline.lower { top: 9px; }
.hline {
  top: 9px;
  height: 1px;
  width: 12px;
  background: repeating-linear-gradient(90deg, #777 0 1px, transparent 1px 2px);
}
.exp {
  position: absolute;
  top: 5px;
  width: 9px;
  height: 9px;
  box-sizing: border-box;
  border: 1px solid #8a95a8;
  background: linear-gradient(#fff, #d5d9e2);
  display: block;
}
.exp b { position: absolute; left: 1px; top: 3px; width: 5px; height: 1px; background: #1c2a52; }
.exp b.v { left: 3px; top: 1px; width: 1px; height: 5px; }
.radio {
  position: relative;
  z-index: 1;
  flex: none;
  width: 13px;
  height: 13px;
  box-sizing: border-box;
  border: 1px solid #5f6367;
  border-radius: 50%;
  background: radial-gradient(circle at 65% 70%, #fff 30%, #d5d8de 80%);
  display: flex;
  align-items: center;
  justify-content: center;
}
.radio b { width: 5px; height: 5px; border-radius: 50%; background: #111; }
.check {
  position: relative;
  z-index: 1;
  flex: none;
  width: 13px;
  height: 13px;
  box-sizing: border-box;
  border: 1px solid #4c4c4c;
  background: linear-gradient(135deg, #dfe2e8, #fff);
  display: flex;
  align-items: center;
  justify-content: center;
}
.check.tri::after { content: ""; width: 7px; height: 7px; background: #989898; }
.ticon { flex: none; margin-left: 2px; }
.lbl { margin-left: 5px; color: #111; }
.lbl sub { font-size: 11px; vertical-align: -1px; line-height: 0; margin-left: 1px; color: #1a2a50; }
.tabs {
  height: 20px;
  flex: none;
  display: flex;
  align-items: center;
  padding-left: 4px;
  color: #555;
}
.tab { display: flex; align-items: center; gap: 1px; margin-right: 9px; height: 20px; }
.tab.cur { background: #f4f7fa; border-radius: 0 0 4px 4px; padding: 0 1px; margin-right: 0; margin-left: -1px; }
.mdi {
  flex: 1;
  min-width: 0;
  margin-left: 4px;
  border-left: 1px solid #6d737c;
  border-top: 1px solid #6d737c;
  background: #abadb3;
  padding: 2px 3px 0 1px;
  display: flex;
  flex-direction: column;
  gap: 2px;
}
.child {
  height: 441px;
  flex: none;
  box-sizing: border-box;
  border: 1px solid #6c7885;
  border-radius: 3px 3px 0 0;
  background: #d3e1ef;
  padding: 0 8px;
}
.child.active { background: #b9d3ec; }
.chead {
  height: 30px;
  box-sizing: border-box;
  margin: 0 -8px;
  padding: 3px 8px 0;
  display: flex;
  align-items: center;
  background: linear-gradient(#bccad8, #d8e4f0);
  color: #5c6573;
}
.child.active .chead { background: linear-gradient(#9fbdd9, #c6daee); color: #111; }
.chicon { flex: none; }
.ctitle { margin-left: 4px; }
.cbtns { margin-left: auto; display: flex; gap: 2px; margin-right: 1px; }
.cb {
  width: 30px;
  height: 16px;
  box-sizing: border-box;
  border: 1px solid #7d8c9e;
  border-radius: 2px;
  background: linear-gradient(#d5e0ec, #bccbdc);
  display: flex;
  align-items: center;
  justify-content: center;
}
.child:not(.active) .cb { background: linear-gradient(#e6edf5, #d2dde9); }
.child.active .cb.x { background: linear-gradient(#cf8a80, #b0453a 50%, #c9665a); border-color: #7a4a44; }
.child:not(.active) .gx { color: #8d97a3; text-shadow: none; }
.view { display: block; outline: 1px solid #fff; }
.ltxt { font: bold 10px "Liberation Sans", Arial, sans-serif; fill: #a9c9ec; }
.gtxt { font: 9.5px "Liberation Sans", Arial, sans-serif; fill: #14f014; }

.status {
  flex: none;
  display: flex;
  align-items: flex-end;
  height: 23px;
  background: linear-gradient(#e3e5e9, #c1c4ca 45%, #b0b3b9);
  color: #333;
  position: relative;
  letter-spacing: -.6px;
}
.plan { width: 441px; box-sizing: border-box; padding-left: 4px; flex: none; height: 19px; line-height: 21px; }
.pane {
  flex: none;
  height: 19px;
  line-height: 19px;
  box-sizing: border-box;
  text-align: center;
  white-space: nowrap;
  margin-right: 1px;
  overflow: hidden;
}
.pane.in { border: 1px solid; border-color: #222 #f4f4f4 #f4f4f4 #222; }
.pane.up { border: 1px solid; border-color: #f4f4f4 #777 #777 #f4f4f4; line-height: 15px; letter-spacing: -.4px; }
.ssep { flex: none; width: 1px; height: 20px; background: #8a8d93; margin-left: 1px; }
.info {
  flex: none;
  box-sizing: border-box;
  white-space: pre;
  padding-left: 2px;
  height: 19px;
  line-height: 21px;
  border-left: 1px solid #8a8d93;
  color: #444;
}
.status .info:nth-child(9) { border-left: none; margin-left: 61px; }
.sgrip { position: absolute; right: 1px; bottom: 0; }
.over { position: absolute; left: -1px; top: -1px; pointer-events: none; }
</style>
